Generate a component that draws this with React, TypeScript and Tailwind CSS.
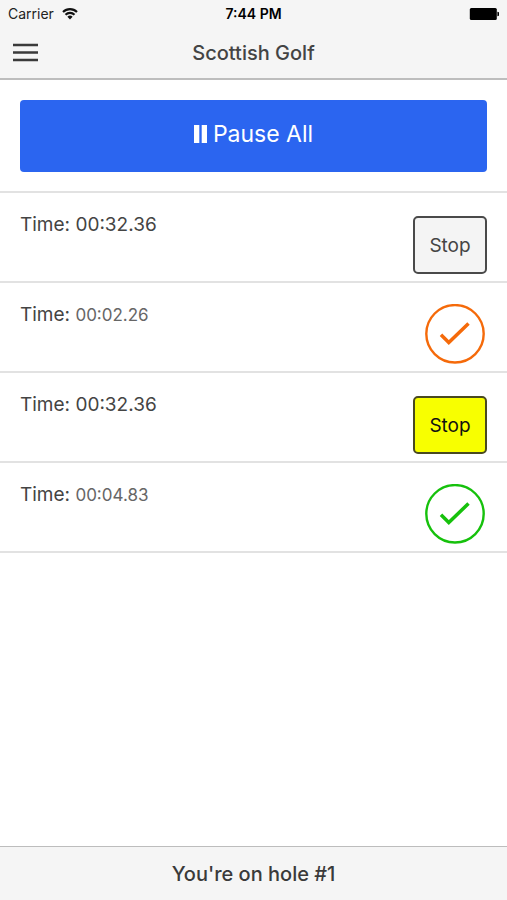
type Timer = {
  id: number
  time: string
  status: 'running' | 'done'
  tone: string
}

const timers: Timer[] = [
  { id: 1, time: '00:32.36', status: 'running', tone: 'border-[#4a4a4a] bg-[#f4f4f4] text-[#444444]' },
  { id: 2, time: '00:02.26', status: 'done', tone: 'text-[#f56a0a]' },
  { id: 3, time: '00:32.36', status: 'running', tone: 'border-[#4a4a20] bg-[#f8ff00] text-[#111111]' },
  { id: 4, time: '00:04.83', status: 'done', tone: 'text-[#16c10c]' },
]

function StatusBar() {
  return (
    <div className="grid h-7 grid-cols-3 items-center px-2 text-sm text-[#222222]">
      <div className="flex items-center gap-2">
        <span>Carrier</span>
        <svg className="h-3 w-4" viewBox="0 0 16 12" fill="none" stroke="#111111" strokeWidth="2.1" aria-hidden="true">
          <path d="M1 4a10 10 0 0 1 14 0" />
          <path d="M3.5 6.8a6.3 6.3 0 0 1 9 0" />
          <path d="M8 11.4 5.4 8.8a3.7 3.7 0 0 1 5.2 0Z" fill="#111111" stroke="none" />
        </svg>
      </div>
      <span className="text-center text-sm font-semibold text-black">7:44 PM</span>
      <svg className="h-3 w-[30px] justify-self-end" viewBox="0 0 30 12" fill="#000000" aria-hidden="true">
        <rect x="0.8" y="0" width="27" height="12" rx="1.5" />
        <path d="M28.4 3.8a2 2.2 0 0 1 0 4.4Z" />
      </svg>
    </div>
  )
}

function Header() {
  return (
    <header className="border-b-2 border-[#bdbdbd] bg-[#f5f5f5]">
      <StatusBar />
      <div className="grid h-[50px] grid-cols-[40px_1fr_40px] items-center px-3">
        <button type="button" aria-label="Menu">
          <svg className="h-5 w-[27px]" viewBox="0 0 27 20" stroke="#3a3a3a" strokeWidth="2.6" aria-hidden="true">
            <path d="M1 2h25M1 9.5h25M1 17h25" />
          </svg>
        </button>
        <h1 className="text-center text-xl font-medium text-[#444444]">Scottish Golf</h1>
      </div>
    </header>
  )
}

function TimerRow({ timer }: { timer: Timer }) {
  const running = timer.status === 'running'

  return (
    <li className="flex h-[90px] items-start justify-between border-b-2 border-[#e2e2e2] px-5">
      <p className="pt-[18px] text-[19px] leading-7 text-[#444444]">
        Time:{' '}
        {running ? <span>{timer.time}</span> : <span className="text-[17px] text-[#666666]">{timer.time}</span>}
      </p>
      {running ? (
        <button
          type="button"
          className={`mt-[23px] h-[58px] w-[74px] rounded-[5px] border-2 pt-0.5 text-[19px] ${timer.tone}`}
        >
          Stop
        </button>
      ) : (
        <svg
          className={`mt-[21px] mr-0.5 size-[60px] ${timer.tone}`}
          viewBox="0 0 60 60"
          fill="none"
          stroke="currentColor"
          role="img"
          aria-label="Done"
        >
          <circle cx="30" cy="29.8" r="28.7" strokeWidth="2.4" />
          <path d="M16 30.7 23.8 38.5 43.5 19.5" strokeWidth="3.5" />
        </svg>
      )}
    </li>
  )
}

export default function App() {
  return (
    <div className="flex min-h-screen flex-col bg-white font-['Inter',sans-serif]">
      <Header />
      <main className="flex-1">
        <div className="border-b-2 border-[#e2e2e2] px-5 pt-5 pb-[19px]">
          <button
            type="button"
            className="flex h-[72px] w-full items-center justify-center gap-1.5 rounded bg-[#2b65f0] pb-1 text-[23px] text-white"
          >
            <svg className="h-[18px] w-[13px]" viewBox="0 0 13 18" fill="currentColor" aria-hidden="true">
              <rect x="0" y="0" width="5.3" height="18" />
              <rect x="7.7" y="0" width="5.3" height="18" />
            </svg>
            <span>Pause All</span>
          </button>
        </div>
        <ul>
          {timers.map((timer) => (
            <TimerRow key={timer.id} timer={timer} />
          ))}
        </ul>
      </main>
      <footer className="flex h-[54px] items-center justify-center border-t border-[#bdbdbd] bg-[#f5f5f5] text-xl font-medium text-[#3a3a3a]">
        You're on hole #1
      </footer>
    </div>
  )
}
